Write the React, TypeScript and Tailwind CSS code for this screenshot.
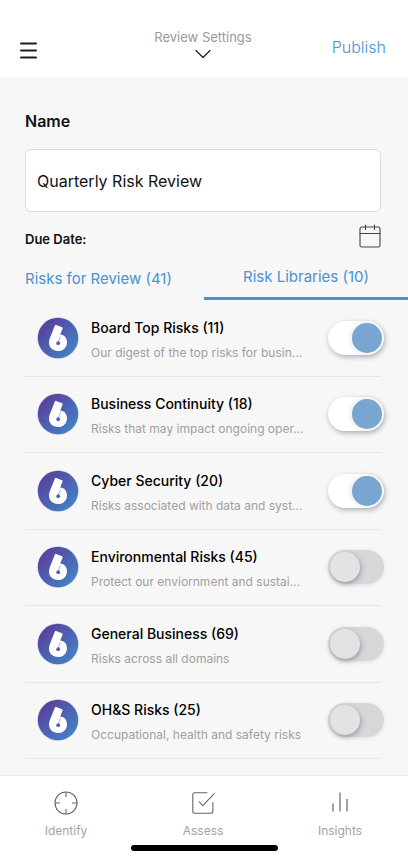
import { useState } from "react"
import type React from "react"

type Library = {
  id: string
  title: string
  description: string
  enabled: boolean
}

const LIBRARIES: Library[] = [
  { id: "board", title: "Board Top Risks (11)", description: "Our digest of the top risks for busin...", enabled: true },
  { id: "continuity", title: "Business Continuity (18)", description: "Risks that may impact ongoing oper...", enabled: true },
  { id: "cyber", title: "Cyber Security (20)", description: "Risks associated with data and syst...", enabled: true },
  { id: "environment", title: "Environmental Risks (45)", description: "Protect our enviornment and sustai...", enabled: false },
  { id: "general", title: "General Business (69)", description: "Risks across all domains", enabled: false },
  { id: "ohs", title: "OH&S Risks (25)", description: "Occupational, health and safety risks", enabled: false },
]

const NAV_ITEMS = [
  { label: "Identify", icon: <TargetIcon /> },
  { label: "Assess", icon: <AssessIcon /> },
  { label: "Insights", icon: <BarsIcon /> },
]

export default function App(): React.JSX.Element {
  const [name, setName] = useState("Quarterly Risk Review")
  const [tab, setTab] = useState<"review" | "libraries">("libraries")

  return (
    <div className="flex min-h-dvh flex-col bg-[#f7f7f7] font-['Inter',sans-serif] text-[#111]">
      <Header />

      <main className="flex flex-1 flex-col pt-8 pb-4">
        <div className="flex flex-col pr-[27px] pl-[25px]">
          <label htmlFor="review-name" className="text-base font-semibold">
            Name
          </label>
          <input
            id="review-name"
            value={name}
            onChange={(e) => setName(e.target.value)}
            className="mt-4 h-[63px] w-full rounded-md border border-[#dcdcdc] bg-white px-[11px] text-base text-[#111] outline-none"
          />
          <div className="mt-2 flex h-8 items-center justify-between">
            <span className="pt-2 text-[13px] font-semibold">Due Date:</span>
            <button type="button" aria-label="Pick due date">
              <CalendarIcon />
            </button>
          </div>
        </div>

        <div role="tablist" className="grid h-12 grid-cols-2 text-[15px] text-[#4a92d0]">
          <TabButton active={tab === "review"} onClick={() => setTab("review")}>
            Risks for Review (41)
          </TabButton>
          <TabButton active={tab === "libraries"} onClick={() => setTab("libraries")}>
            Risk Libraries (10)
          </TabButton>
        </div>

        <ul className="flex flex-1 flex-col pr-6 pl-[25px]">
          {LIBRARIES.map((lib) => (
            <LibraryRow key={lib.id} library={lib} />
          ))}
        </ul>
      </main>

      <BottomNav />
    </div>
  )
}

function Header() {
  return (
    <header className="grid h-[77px] grid-cols-3 items-end bg-white pr-[22px] pb-[14px] pl-5">
      <button type="button" aria-label="Menu" className="justify-self-start pb-1">
        <svg width="17" height="17" viewBox="0 0 17 17" stroke="#1b1a26" strokeWidth="2" strokeLinecap="round">
          <path d="M1 1.5h15M1 8.5h15M1 15.5h15" />
        </svg>
      </button>
      <button type="button" className="flex flex-col items-center gap-1 justify-self-center pb-1">
        <span className="text-[13px] leading-4 whitespace-nowrap text-[#999]">Review Settings</span>
        <svg width="16" height="10" viewBox="0 0 16 10" fill="none" stroke="#1b1a26" strokeWidth="1.2" strokeLinecap="round" strokeLinejoin="round">
          <path d="M1 1.5l7 7 7-7" />
        </svg>
      </button>
      <button type="button" className="justify-self-end pb-1 text-base leading-6 font-light text-[#4a92d0]">
        Publish
      </button>
    </header>
  )
}

type TabButtonProps = {
  active: boolean
  onClick: () => void
  children: React.ReactNode
}

function TabButton({ active, onClick, children }: TabButtonProps) {
  return (
    <button
      type="button"
      role="tab"
      aria-selected={active}
      onClick={onClick}
      className={active ? "border-b-3 border-[#4a92d0] pt-[6px]" : "pt-[6px] pl-[25px] text-left"}
    >
      {children}
    </button>
  )
}

function LibraryRow({ library }: { library: Library }) {
  const [on, setOn] = useState(library.enabled)

  return (
    <li className="flex flex-1 flex-col">
      <label htmlFor={library.id} className="flex flex-1 items-center pl-3">
        <LogoBadge />
        <div className="ml-3 min-w-0 flex-1 pt-[5px]">
          <div className="truncate text-sm leading-5 font-medium text-black">{library.title}</div>
          <div className="mt-[5px] truncate text-xs leading-5 text-[#a0a0a0]">{library.description}</div>
        </div>
        <input
          id={library.id}
          type="checkbox"
          role="switch"
          checked={on}
          onChange={(e) => setOn(e.target.checked)}
          className="h-[34px] w-14 shrink-0 appearance-none rounded-full bg-[#d7d7da] p-[2px] shadow-[0_1px_4px_rgba(60,60,90,0.12)] before:block before:size-[30px] before:rounded-full before:bg-[#e3e3e3] before:shadow-[1px_2px_5px_rgba(60,60,90,0.4)] checked:bg-white checked:shadow-[1px_2px_5px_rgba(60,60,90,0.4)] checked:before:translate-x-[22px] checked:before:bg-[#78a6d0] checked:before:shadow-[-1px_0_5px_rgba(60,60,90,0.15)]"
        />
      </label>
      <div className="mr-[3px] h-px bg-[#e6e6e6]" />
    </li>
  )
}

function BottomNav() {
  return (
    <footer className="border-t border-[#e8e8e8] bg-white pb-[9px]">
      <nav className="flex justify-between pt-[15px] pr-11 pl-[42px]">
        {NAV_ITEMS.map((item) => (
          <a key={item.label} href="#" className="flex w-12 flex-col items-center gap-2 text-xs leading-4 text-[#a3a3a3]">
            {item.icon}
            {item.label}
          </a>
        ))}
      </nav>
      <div className="mx-auto mt-[6px] h-[6px] w-[147px] rounded-full bg-black" />
    </footer>
  )
}

function LogoBadge() {
  return (
    <svg width="42" height="42" viewBox="0 0 42 42" aria-hidden="true" className="shrink-0">
      <defs>
        <linearGradient id="badge" x1="0.1" y1="0.1" x2="0.9" y2="0.9">
          <stop offset="0" stopColor="#5a3d9c" />
          <stop offset="1" stopColor="#4184c6" />
        </linearGradient>
      </defs>
      <circle cx="21" cy="21" r="21" fill="#dedee4" />
      <circle cx="21" cy="21" r="20.2" fill="url(#badge)" />
      <path
        d="M17.9 8.4Q18.3 7.5 19.2 7.9L25 10.3Q25.9 10.7 25.6 11.5L23.2 17.4C27.2 17.5 30 20.7 30 25.2C30 30.4 26.4 34 21 34C15.5 34 12 30.6 12 25.6C12 23.7 12.5 22.1 13.2 20.3Z"
        fill="#fff"
      />
      <circle cx="21.2" cy="26.2" r="1.9" fill="#4b62b2" />
      <path d="M21.3 25.4L23.3 19.4" stroke="#4b62b2" strokeWidth="0.5" />
    </svg>
  )
}

function CalendarIcon() {
  return (
    <svg width="22" height="24" viewBox="0 0 22 24" fill="none" stroke="#444" strokeWidth="1.1" strokeLinecap="round">
      <rect x="1" y="3" width="20" height="20" rx="1.8" />
      <path d="M1 9.5h20M6.5 1v4.5M15.5 1v4.5" />
    </svg>
  )
}

function TargetIcon() {
  return (
    <svg width="24" height="24" viewBox="0 0 24 24" fill="none" stroke="#666" strokeWidth="1.1">
      <circle cx="12" cy="12" r="11" />
      <path d="M12 1v5M12 18v5M1 12h5M18 12h5" />
    </svg>
  )
}

function AssessIcon() {
  return (
    <svg width="24" height="24" viewBox="0 0 24 24" fill="none" stroke="#666" strokeWidth="1.1" strokeLinecap="round" strokeLinejoin="round">
      <path d="M16 1.8H3.5Q1.8 1.8 1.8 3.5V20.5Q1.8 22.2 3.5 22.2H20.2Q21.9 22.2 21.9 20.5V11.5" />
      <path d="M8.2 10.8l3.6 3.8L23 2.8" />
    </svg>
  )
}

function BarsIcon() {
  return (
    <svg width="24" height="24" viewBox="0 0 24 24" fill="none" stroke="#666" strokeWidth="1.2">
      <path d="M5 12.5V20.5M12 1.5V20.5M19 8V20.5" />
    </svg>
  )
}
